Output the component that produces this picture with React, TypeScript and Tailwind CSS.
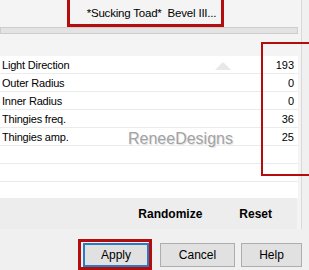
const rows = [
  { label: 'Light Direction', value: '193' },
  { label: 'Outer Radius', value: '0' },
  { label: 'Inner Radius', value: '0' },
  { label: 'Thingies freq.', value: '36' },
  { label: 'Thingies amp.', value: '25' },
];

export default function App() {
  return (
    <div
      className="relative w-[309px] h-[270px] overflow-hidden bg-[#f0f0f0] text-[11px] text-black"
      style={{ fontFamily: '"Liberation Sans", Arial, sans-serif' }}
    >
      {/* Filter panel */}
      <div className="w-[302px] h-[229px] flex flex-col bg-[#f4f4f4] border-r border-[#d9d9d9]">
        {/* Title */}
        <div className="h-[27px] flex items-center justify-center pl-[2px]">
          <span className="text-[11.5px] tracking-[-0.2px]">*Sucking Toad*&nbsp; Bevel III...</span>
        </div>
        <div className="w-[298px] h-[8px] bg-[#e3e3e3] border border-[#cdcdcd]" />

        {/* Parameter list */}
        <div className="mt-[22px] w-[298px] bg-white flex flex-col relative">
          {rows.map((r) => (
            <div
              key={r.label}
              className="h-[18px] flex items-center justify-between pl-[2px] pr-[4px] border-b border-[#ebebeb]"
            >
              <span className="tracking-[-0.2px]">{r.label}</span>
              <span>{r.value}</span>
            </div>
          ))}
          <div className="h-[18px] border-b border-[#ebebeb]" />
          <div className="h-[18px] border-b border-[#ebebeb]" />
          <div className="h-[16px]" />

          {/* faint slider marker */}
          <svg className="absolute left-[215px] top-[6px]" width="16" height="8" viewBox="0 0 16 8">
            <polygon points="8,0 16,8 0,8" fill="#e8e8e8" />
          </svg>
          {/* watermark */}
          <span
            className="absolute left-[128px] top-[71px] text-[16px] text-[#a3a3a3]"
            style={{ textShadow: '1px 1px 0 #e6e6e6' }}
          >
            ReneeDesigns
          </span>
        </div>

        {/* Randomize / Reset */}
        <div className="w-[297px] h-[31px] bg-[#ededed] flex items-center justify-end pr-[25px] gap-[37px] font-bold text-[12px]">
          <span>Randomize</span>
          <span>Reset</span>
        </div>
      </div>

      {/* Dialog buttons */}
      <div className="mt-[14px] flex pl-[83px] gap-[12px]">
        <button className="w-[66px] h-[24px] bg-[#e1e1e1] border-2 border-[#2a7bc4] text-[12px]">Apply</button>
        <button className="w-[75px] h-[24px] bg-[#e1e1e1] border border-[#adadad] text-[12px] -ml-[1px]">Cancel</button>
        <button className="w-[61px] h-[24px] bg-[#e1e1e1] border border-[#adadad] text-[12px] -ml-[6px]">Help</button>
      </div>

      {/* Red annotation boxes */}
      <div className="absolute left-[67px] top-[-3px] w-[157px] h-[30px] border-[3px] border-[#b30d0d]" />
      <div className="absolute left-[261px] top-[42px] w-[60px] h-[134px] border-[2px] border-[#b30d0d]" />
      <div className="absolute left-[78px] top-[239px] w-[74px] h-[31px] border-[3px] border-[#b30d0d]" />
    </div>
  );
}
